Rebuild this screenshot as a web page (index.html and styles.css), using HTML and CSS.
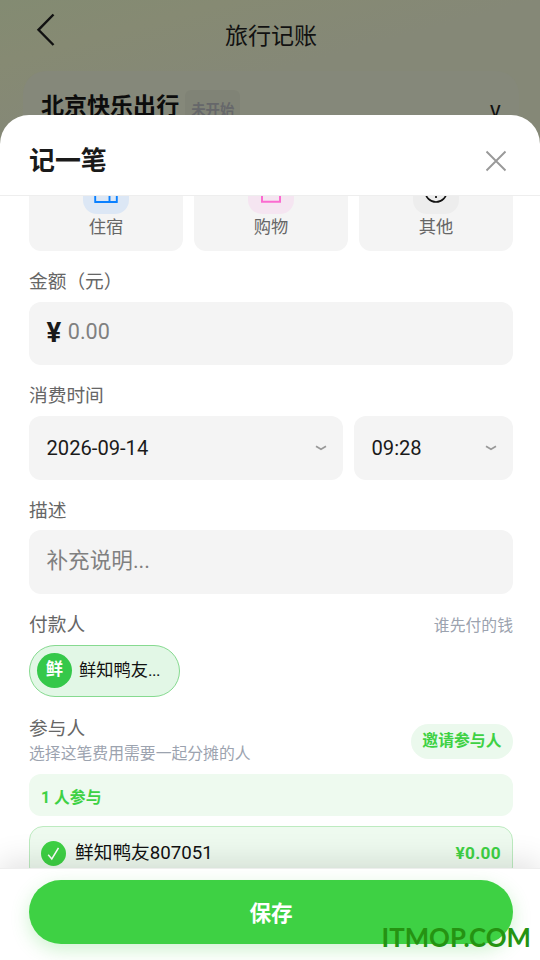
FILE: index.html
```html
<!DOCTYPE html>
<html lang="zh-CN">
<head>
<meta charset="utf-8">
<title>旅行记账</title>
<link rel="stylesheet" href="styles.css">
</head>
<body>
<div class="page">
  <header class="nav">
    <svg class="back" width="20" height="34" viewBox="0 0 20 34"><path d="M17.5 1.5 2.5 16.8 17.5 32" fill="none" stroke="#111" stroke-width="2.4"/></svg>
    <h1 class="nav-title">旅行记账</h1>
  </header>
  <section class="trip">
    <span class="trip-name">北京快乐出行</span>
    <span class="trip-state">未开始</span>
    <span class="trip-arrow">v</span>
  </section>
</div>

<div class="sheet">
  <div class="sheet-head">
    <h2>记一笔</h2>
    <svg class="close" width="22" height="22" viewBox="0 0 22 22"><path d="M1.500 1.500 20.500 20.500M20.500 1.500 1.500 20.500" stroke="#999" stroke-width="1.900" fill="none"/></svg>
  </div>

  <div class="sheet-body">
    <div class="scroll">
      <div class="cats">
        <div class="cat">
          <span class="cat-icon blue"><svg width="46" height="46" viewBox="0 0 46 46" fill="none" stroke="#0a80ff" stroke-width="1.900"><path d="M12.200 34V12.500H26.500V34M26.500 20H33.800V34M11.300 34H34.700"/></svg></span>
          <span>住宿</span>
        </div>
        <div class="cat">
          <span class="cat-icon pink"><svg width="46" height="46" viewBox="0 0 46 46" fill="none" stroke="#fb6bd0" stroke-width="2"><path d="M14 17H32V33.800H14ZM18.500 17V12H27.500V17"/></svg></span>
          <span>购物</span>
        </div>
        <div class="cat">
          <span class="cat-icon gray"><svg width="46" height="46" viewBox="0 0 46 46" fill="none" stroke="#111" stroke-width="1.700"><circle cx="23" cy="23.300" r="10.700"/><path d="M23 17V26M23 28V30"/></svg></span>
          <span>其他</span>
        </div>
      </div>

      <div class="section">
        <div class="label">金额（元）</div>
        <div class="field amount"><b>¥</b><span>0.00</span></div>
      </div>

      <div class="section">
        <div class="label">消费时间</div>
        <div class="times">
          <div class="field pick"><span>2026-09-14</span><svg width="12" height="8" viewBox="0 0 12 8"><path d="M1 2.300 6 5.300 11 2.300" fill="none" stroke="#999" stroke-width="1.700"/></svg></div>
          <div class="field pick"><span>09:28</span><svg width="12" height="8" viewBox="0 0 12 8"><path d="M1 2.300 6 5.300 11 2.300" fill="none" stroke="#999" stroke-width="1.700"/></svg></div>
        </div>
      </div>

      <div class="section">
        <div class="label">描述</div>
        <div class="field note">补充说明...</div>
      </div>

      <div class="section">
        <div class="label split"><span>付款人</span><small>谁先付的钱</small></div>
        <div class="payer"><span class="avatar">鲜</span><span class="payer-name">鲜知鸭友<span class="dots">...</span></span></div>
      </div>

      <div class="section people">
        <div class="people-head">
          <div>
            <div class="label">参与人</div>
            <div class="hint">选择这笔费用需要一起分摊的人</div>
          </div>
          <span class="invite">邀请参与人</span>
        </div>
        <div class="count">1 人参与</div>
        <div class="member">
          <svg class="tick" width="25" height="25" viewBox="0 0 25 25"><circle cx="12.500" cy="12.500" r="12.500" fill="#3ed144"/><path d="M7.200 13.800 10.800 18 17.500 6.800" fill="none" stroke="#fff" stroke-width="1.500"/></svg>
          <span class="member-name">鲜知鸭友807051</span>
          <span class="member-sum">¥0.00</span>
        </div>
      </div>
    </div>
  </div>

  <div class="sheet-foot">
    <div class="save">保存</div>
  </div>
</div>
<div class="mark">ITMOP.COM</div>
</body>
</html>
```

FILE: styles.css
```css
* { box-sizing: border-box; }

body {
  margin: 0;
  width: 540px;
  height: 960px;
  overflow: hidden;
  position: relative;
  font-family: Roboto, "Noto Sans CJK SC", sans-serif;
  color: #1a1a1a;
}

h1, h2 { margin: 0; }

.page {
  height: 960px;
  background: linear-gradient(165deg, #838b72 0, #868a73 60px, #858877 140px);
  display: flex;
  flex-direction: column;
}

.nav {
  height: 71px;
  display: grid;
  grid-template-columns: 60px 1fr 60px;
  align-items: center;
}

.back { margin: -12px 0 0 36px; }

.nav-title {
  margin: -4px 0 0 2px;
  text-align: center;
  font-size: 23.04px;
  font-weight: 400;
  color: #111;
}

.trip {
  margin: 0 21px 0 23px;
  height: 160px;
  padding: 19px 18px;
  border-radius: 23px;
  background: #85887a;
  display: flex;
  align-items: flex-start;
}

.trip-name {
  font-size: 23.04px;
  font-weight: 700;
  line-height: 34px;
  color: #0c0c0c;
}

.trip-state {
  margin: 0 auto 0 6px;
  padding: 0 6px;
  height: 36px;
  line-height: 41px;
  border-radius: 6px;
  background: #808376;
  color: #66676a;
  font-size: 14.4px;
  font-weight: 700;
}

.trip-arrow {
  margin: 6px 0 0;
  font-size: 23px;
  line-height: 30px;
  color: #111;
}

.sheet {
  position: absolute;
  left: 0;
  right: 0;
  top: 115px;
  bottom: 0;
  background: #fff;
  border-radius: 29px 29px 0 0;
  overflow: hidden;
  display: flex;
  flex-direction: column;
}

.sheet-head {
  flex: none;
  height: 81px;
  padding: 0 33px 0 29px;
  border-bottom: 1px solid #eee;
  display: flex;
  align-items: center;
  justify-content: space-between;
}

.sheet-head h2 {
  font-size: 25.92px;
  font-weight: 700;
  line-height: 36px;
  margin-top: 12px;
}

.close { margin-top: 12px; }

.sheet-body {
  flex: 1;
  min-height: 0;
  overflow: hidden;
}

.scroll {
  margin-top: -45px;
  padding: 0 27px 0 29px;
}

.cats {
  display: grid;
  grid-template-columns: repeat(3, 1fr);
  gap: 11px;
}

.cat {
  height: 100px;
  padding-top: 17px;
  border-radius: 12px;
  background: #f4f4f4;
  display: flex;
  flex-direction: column;
  align-items: center;
  font-size: 17.28px;
  line-height: 26px;
  color: #666;
}

.cat-icon {
  width: 46px;
  height: 46px;
  border-radius: 14px;
  overflow: hidden;
  display: flex;
}

.blue { background: #dce7f5; }
.pink { background: #f5e5f1; }
.gray { background: #ededed; }

.section {
  margin-top: 16px;
  display: flex;
  flex-direction: column;
  gap: 6.8px;
}

.label {
  height: 28px;
  line-height: 30px;
  font-size: 18.72px;
  color: #666;
}

.split {
  display: flex;
  justify-content: space-between;
}

.split small {
  font-size: 15.84px;
  line-height: 32px;
  color: #9ca3af;
}

.field {
  height: 63.5px;
  padding: 0 16px 0 17.5px;
  border-radius: 12px;
  background: #f4f4f4;
  display: flex;
  align-items: center;
}

.amount {
  gap: 6.5px;
  padding-bottom: 4px;
}

.amount b {
  font-size: 27.5px;
  line-height: 32px;
  margin-top: 2px;
}

.amount span {
  font-size: 21.6px;
  color: #808080;
}

.times {
  display: grid;
  grid-template-columns: 314px 1fr;
  gap: 11px;
}

.pick {
  justify-content: space-between;
  font-size: 20.16px;
}

.note {
  padding-bottom: 7px;
  font-size: 21.6px;
  color: #808080;
}

.payer {
  align-self: flex-start;
  width: 151px;
  height: 52px;
  margin-top: 0.3px;
  padding: 0 7px;
  border: 1px solid #86da90;
  border-radius: 26px;
  background: #e2f7e6;
  display: flex;
  align-items: center;
  gap: 7px;
}

.avatar {
  width: 35px;
  height: 35px;
  border-radius: 50%;
  background: #35c84a;
  color: #fff;
  text-align: center;
  line-height: 32px;
  font-size: 17.28px;
  font-weight: 700;
}

.payer-name {
  font-size: 17.28px;
  line-height: 26px;
  margin-top: -1px;
  color: #111;
}

.dots { letter-spacing: -0.6px; }

.people {
  margin-top: 17px;
  gap: 10px;
}

.people-head {
  display: flex;
  justify-content: space-between;
  align-items: flex-end;
}

.hint {
  height: 22px;
  line-height: 24px;
  font-size: 15.84px;
  color: #9ca3af;
}

.invite {
  height: 35px;
  margin-bottom: 5px;
  padding: 0 11.5px;
  border-radius: 18px;
  background: #ebf9ed;
  color: #3ed144;
  font-size: 15.84px;
  font-weight: 700;
  line-height: 33px;
}

.count {
  height: 42px;
  padding: 3px 12px 0;
  border-radius: 12px;
  background: #eefaef;
  color: #3ed144;
  font-size: 15.84px;
  font-weight: 700;
  line-height: 42px;
}

.member {
  height: 55px;
  padding: 0 11px;
  border: 1px solid #bdebc0;
  border-radius: 14px;
  background: #eefaef;
  display: flex;
  align-items: center;
}

.member-name {
  margin: 0 auto 0 9px;
  font-size: 18.72px;
  line-height: 28px;
  color: #111;
}

.member-sum {
  font-size: 17.28px;
  font-weight: 700;
  letter-spacing: 0.3px;
  color: #3ed144;
}

.sheet-foot {
  flex: none;
  position: relative;
  height: 92px;
  padding: 11px 27px 0 29px;
  border-top: 1px solid #eee;
  background: #fff;
  box-shadow: 0 -6px 29px rgba(0, 0, 0, 0.12);
}

.save {
  height: 64px;
  border-radius: 32px;
  background: #3ed144;
  box-shadow: 0 6px 18px rgba(62, 209, 68, 0.25);
  color: #fff;
  text-align: center;
  font-size: 21.6px;
  font-weight: 700;
  line-height: 67px;
}

.mark {
  position: absolute;
  right: 9px;
  bottom: 5px;
  font-family: Lato, sans-serif;
  font-size: 25.8px;
  font-weight: 700;
  line-height: 36px;
  color: #259312;
}
```
